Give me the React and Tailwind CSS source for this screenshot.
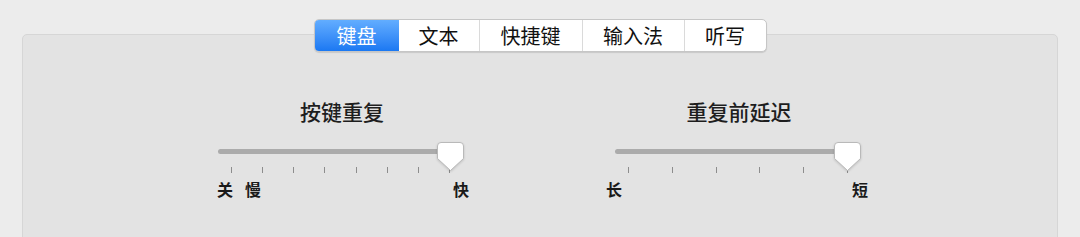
import React from 'react';

const font = { fontFamily: '"Noto Sans CJK SC", "Noto Sans", sans-serif' };

const tabs = [
  { name: '键盘', w: 'w-[84px]' },
  { name: '文本', w: 'w-[80px]' },
  { name: '快捷键', w: 'w-[103px]' },
  { name: '输入法', w: 'w-[102px]' },
  { name: '听写', w: 'w-[82px]' },
];

function Thumb() {
  return (
    <svg width="27" height="30" viewBox="0 0 27 30" className="drop-shadow-[0_1px_1px_rgba(0,0,0,0.15)]">
      <path
        d="M4 0.5 H23 Q26.5 0.5 26.5 4 V16.5 L13.5 28.5 L0.5 16.5 V4 Q0.5 0.5 4 0.5 Z"
        fill="#ffffff"
        stroke="#b9b9b9"
        strokeWidth="1"
      />
    </svg>
  );
}

function Slider({ title, ticks, tickWidth, labels }) {
  return (
    <div className="flex w-[254px] flex-col">
      <div className="h-[24px] text-center text-[21px] leading-[24px] font-medium text-[#1e1e1e]">{title}</div>
      {/* track + thumb */}
      <div className="relative mt-[24px] h-[20px]">
        <div className="ml-[3px] mt-[2px] h-[5px] w-[234px] rounded-full bg-[#ababab]"></div>
        <div className="absolute left-[222px] top-[-5px]">
          <Thumb />
        </div>
      </div>
      {/* ticks */}
      <div className="ml-[16px] flex h-[6px] justify-between" style={{ width: tickWidth }}>
        {Array.from({ length: ticks }).map((_, i) => (
          <span key={i} className="h-[6px] w-px bg-[#8d8d8d]"></span>
        ))}
      </div>
      {/* labels */}
      <div className="mt-[6px] flex h-[20px] items-center text-[16px] leading-[20px] font-semibold text-[#1a1a1a]">
        {labels}
      </div>
    </div>
  );
}

export default function App() {
  return (
    <div className="h-[237px] w-[1080px] overflow-hidden bg-[#ececec]" style={font}>
      <div className="px-[22px] pt-[34px]">
        <div className="flex h-[220px] flex-col rounded-[5px] border border-[#d6d6d6] bg-[#e3e3e3]">
          {/* Tabs */}
          <div className="-mt-[16px] flex h-[33px] self-center overflow-hidden rounded-[5px] border border-[#c6c6c6] bg-white shadow-[0_1px_1px_rgba(0,0,0,0.12)]">
            {tabs.map((tab, i) => (
              <div
                key={tab.name}
                className={`flex items-center justify-center text-[20px] leading-none ${tab.w} ${
                  i === 0
                    ? 'bg-gradient-to-b from-[#62adff] to-[#1a78f2] text-white'
                    : 'border-l border-[#dadada] text-[#111]'
                } ${i === 1 ? 'border-l-0' : ''}`}
              >
                {tab.name}
              </div>
            ))}
          </div>

          {/* Sliders */}
          <div className="mt-[47px] flex pl-[192px]">
            <Slider
              title="按键重复"
              ticks={8}
              tickWidth="219px"
              labels={
                <>
                  <span className="ml-[2px]">关</span>
                  <span className="ml-[12px]">慢</span>
                  <span className="ml-auto">快</span>
                </>
              }
            />
            <div className="w-[143px]"></div>
            <Slider
              title="重复前延迟"
              ticks={6}
              tickWidth="220px"
              labels={
                <>
                  <span className="ml-[-6px]">长</span>
                  <span className="ml-auto mr-[-2px]">短</span>
                </>
              }
            />
          </div>
        </div>
      </div>
    </div>
  );
}
